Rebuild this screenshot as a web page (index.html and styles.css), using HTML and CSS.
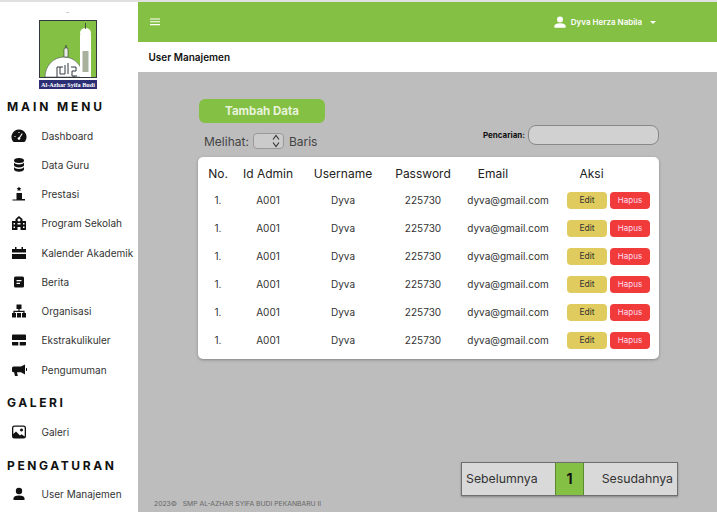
FILE: index.html
```html
<!DOCTYPE html>
<html lang="en">
<head>
  <meta charset="UTF-8">
  <meta name="viewport" content="width=device-width, initial-scale=1.0">
  <title>User Manajemen</title>
  <link rel="stylesheet" href="styles.css">
</head>
<body>
  <aside class="sidebar">
    <div class="logo-dot"></div>
    <svg class="logo" width="58" height="69" viewBox="0 0 58 69">
      <rect width="58" height="69" fill="#fff"/>
      <rect x="0.5" y="0.5" width="57" height="57" fill="#84c044" stroke="#33383f"/>
      <path d="M6 57a19 20 0 0 1 38 0z" fill="#fff" stroke="#33383f" stroke-width="0.5"/>
      <path d="M25 37v-7l0.5-2h3l0.5 2v7z" fill="#e8efe0" stroke="#33383f" stroke-width="0.6"/>
      <path d="M27 28v-3" stroke="#33383f"/>
      <rect x="41" y="15" width="11" height="42" fill="#fff"/>
      <ellipse cx="46.5" cy="13" rx="5.5" ry="5" fill="#fff"/>
      <path d="M46.5 3v6" stroke="#33383f" stroke-width="0.8"/>
      <rect x="43.5" y="31" width="6" height="21" fill="#a9b09c"/>
      <path d="M18 57v-10h6M21 47v7h5v-9M29 43v11M32 47h5v4h-4v5h5M35 56v1" fill="none" stroke="#33383f"/>
      <rect x="0" y="60" width="58" height="9" fill="#2c2f73"/>
      <text class="logo-text" x="29" y="66.5" text-anchor="middle">Al-Azhar Syifa Budi</text>
    </svg>

    <h2 class="menu-title title-main">MAIN MENU</h2>
    <nav class="menu-list">
      <a class="menu-item">
        <svg class="menu-icon" viewBox="0 0 16 16">
          <path d="M8 1.5a7.5 7.5 0 0 0-6.2 11.7 1.500 1.500 0 0 0 1.200 0.800h10a1.500 1.500 0 0 0 1.200-0.800A7.500 7.500 0 0 0 8 1.500z"/>
          <path d="M8 10.500l3.200-5M3.500 8.500h1M8 4v1" stroke="#fff" stroke-width="1.100"/>
          <circle cx="8" cy="10.500" r="1.300" fill="#fff"/>
        </svg>
        Dashboard
      </a>
      <a class="menu-item">
        <svg class="menu-icon" viewBox="0 0 16 16"><ellipse cx="8" cy="3.5" rx="5" ry="2.5"/><path d="M3 5.500c1 2.500 9 2.500 10 0v3c-1 2.500-9 2.500-10 0zM3 10c1 2.500 9 2.500 10 0v2.500c-1 3-9 3-10 0z"/></svg>
        Data Guru
      </a>
      <a class="menu-item">
        <svg class="menu-icon" viewBox="0 0 16 16"><path d="M8 0.500l0.800 1.500 1.600 0.200-1.200 1.100 0.300 1.600L8 4.200l-1.500 0.700 0.300-1.600-1.200-1.100 1.600-0.200zM5.500 7h5.500v6h3v1.500H1.500V13.500h4z"/></svg>
        Prestasi
      </a>
      <a class="menu-item">
        <svg class="menu-icon" viewBox="0 0 16 16"><path d="M8 1l3.500 3v2H15v9H9.500v-3h-3v3H1V6h3.500V4zM8 3.500a1.500 1.500 0 1 0 0.010 0zM2.500 8v1.500H4V8zm0 3.500V13H4v-1.500zM12 8v1.500h1.500V8zm0 3.500V13h1.500v-1.500zM6.500 8v1.500h3V8z" fill-rule="evenodd"/></svg>
        Program Sekolah
      </a>
      <a class="menu-item">
        <svg class="menu-icon" viewBox="0 0 16 16"><path d="M4 2h1.500v2h5V2H12v2h3v3.500H1V4h3zM1 9h14v5H1z"/></svg>
        Kalender Akademik
      </a>
      <a class="menu-item">
        <svg class="menu-icon" viewBox="0 0 16 16"><path d="M4.500 2.500h7A1.500 1.500 0 0 1 13 4v8a1.500 1.500 0 0 1-1.500 1.500h-7A1.500 1.500 0 0 1 3 12V4a1.500 1.500 0 0 1 1.500-1.500zM5.500 6v1.300h5V6zm0 2.800v1.300h3.500V8.800z" fill-rule="evenodd"/></svg>
        Berita
      </a>
      <a class="menu-item">
        <svg class="menu-icon" viewBox="0 0 16 16"><path d="M5.500 1.500h5V6H8.600v1.700h5V10H15v4.500h-4V10h1.300V9H3.700v1H5v4.500H1V10h1.400V7.700h5V6H5.500zM6 10h4v4.500H6z"/></svg>
        Organisasi
      </a>
      <a class="menu-item">
        <svg class="menu-icon" viewBox="0 0 16 16"><path d="M2 2.500h12a1 1 0 0 1 1 1V8H1V3.500a1 1 0 0 1 1-1zM1 10h6.300v3.500H2a1 1 0 0 1-1-1zM8.700 10H15v2.500a1 1 0 0 1-1 1H8.700z"/></svg>
        Ekstrakulikuler
      </a>
      <a class="menu-item">
        <svg class="menu-icon" viewBox="0 0 16 16"><path d="M14 2.500v10l-4-2.200H6l0.800 3.700H4l-0.900-3.700H2.500A1.500 1.500 0 0 1 1 8.800V6a1.500 1.500 0 0 1 1.500-1.500H10zM15 6a1.500 1.500 0 0 1 0 3z"/></svg>
        Pengumuman
      </a>
    </nav>

    <h2 class="menu-title title-sub">GALERI</h2>
    <nav class="menu-list">
      <a class="menu-item">
        <svg class="menu-icon" viewBox="0 0 16 16"><path d="M3.500 1.500h9A2.500 2.500 0 0 1 15 4v8a2.500 2.500 0 0 1-2.500 2.500h-9A2.500 2.500 0 0 1 1 12V4a2.500 2.500 0 0 1 2.500-2.500zm0 1.300A1.200 1.200 0 0 0 2.300 4v6L5 7.500l4 4 1.500-1.300 3.200 2.300V4a1.200 1.200 0 0 0-1.200-1.200zM10.500 4.500a1.500 1.500 0 1 0 0.010 0z" fill-rule="evenodd"/></svg>
        Galeri
      </a>
    </nav>

    <h2 class="menu-title title-sub">PENGATURAN</h2>
    <nav class="menu-list">
      <a class="menu-item">
        <svg class="menu-icon" viewBox="0 0 16 16"><circle cx="8" cy="5" r="3.200"/><path d="M2.500 14v-1.500c0-2 2-3 5.500-3s5.500 1 5.500 3V14z"/></svg>
        User Manajemen
      </a>
    </nav>
  </aside>

  <div class="main">
    <header class="topbar">
      <svg class="burger" width="10" height="8" viewBox="0 0 10 8"><path d="M0 1h10M0 3.800h10M0 6.600h10" stroke="#fff" stroke-width="1.100"/></svg>
      <div class="user-box">
        <svg width="12" height="12" viewBox="0 0 16 16" fill="#fff"><circle cx="8" cy="4.500" r="4"/><path d="M0.500 15.500v-2c0-2.500 3-4 7.500-4s7.500 1.500 7.500 4v2z"/></svg>
        <span class="user-name">Dyva Herza Nabila</span>
        <span class="caret"></span>
      </div>
    </header>
    <div class="page-title">User Manajemen</div>

    <main class="content">
      <button class="btn-add">Tambah Data</button>

      <div class="tools">
        <div class="show-rows">
          <span>Melihat:</span>
          <div class="spinner">
            <svg width="8" height="14" viewBox="0 0 8 14"><path d="M1 5.500L4 1.500l3 4M1 8.500l3 4 3-4" fill="none" stroke="#333" stroke-width="1.100"/></svg>
          </div>
          <span>Baris</span>
        </div>
        <div class="search">
          <label>Pencarian:</label>
          <div class="search-input"></div>
        </div>
      </div>

      <div class="card">
        <div class="row row-head">
          <span>No.</span><span>Id Admin</span><span>Username</span><span>Password</span><span class="head-email">Email</span><span class="head-aksi">Aksi</span>
        </div>
        <div class="row">
          <span>1.</span><span>A001</span><span>Dyva</span><span>225730</span><span>dyva@gmail.com</span>
          <span class="actions"><button class="btn-edit">Edit</button><button class="btn-del">Hapus</button></span>
        </div>
        <div class="row">
          <span>1.</span><span>A001</span><span>Dyva</span><span>225730</span><span>dyva@gmail.com</span>
          <span class="actions"><button class="btn-edit">Edit</button><button class="btn-del">Hapus</button></span>
        </div>
        <div class="row">
          <span>1.</span><span>A001</span><span>Dyva</span><span>225730</span><span>dyva@gmail.com</span>
          <span class="actions"><button class="btn-edit">Edit</button><button class="btn-del">Hapus</button></span>
        </div>
        <div class="row">
          <span>1.</span><span>A001</span><span>Dyva</span><span>225730</span><span>dyva@gmail.com</span>
          <span class="actions"><button class="btn-edit">Edit</button><button class="btn-del">Hapus</button></span>
        </div>
        <div class="row">
          <span>1.</span><span>A001</span><span>Dyva</span><span>225730</span><span>dyva@gmail.com</span>
          <span class="actions"><button class="btn-edit">Edit</button><button class="btn-del">Hapus</button></span>
        </div>
        <div class="row">
          <span>1.</span><span>A001</span><span>Dyva</span><span>225730</span><span>dyva@gmail.com</span>
          <span class="actions"><button class="btn-edit">Edit</button><button class="btn-del">Hapus</button></span>
        </div>
      </div>

      <div class="bottom">
        <div class="copyright">2023&#169;&nbsp;&nbsp; SMP AL-AZHAR SYIFA BUDI PEKANBARU II</div>
        <div class="pager">
          <span class="pager-prev">Sebelumnya</span>
          <span class="pager-num">1</span>
          <span class="pager-next">Sesudahnya</span>
        </div>
      </div>
    </main>
  </div>
</body>
</html>
```
FILE: styles.css
```css
body {
  margin: 0;
  padding-top: 2px;
  box-sizing: border-box;
  background-color: #e0e0e0;
  color: #222;
  font-family: Inter, "Liberation Sans", sans-serif;
  display: flex;
  height: 512px;
  overflow: hidden;
}

/* sidebar */
.sidebar {
  width: 138px;
  flex-shrink: 0;
  background-color: #fff;
  display: flex;
  flex-direction: column;
}

.logo-dot {
  flex-shrink: 0;
  width: 3px;
  height: 1px;
  background-color: #ccc;
  margin: 10px 0 0 66px;
}

.logo {
  display: block;
  flex-shrink: 0;
  margin: 7px 0 0 39px;
}

.logo-text {
  font-family: "Liberation Serif", serif;
  font-size: 6.2px;
  font-weight: 700;
  fill: #fff;
}

.menu-title {
  flex-shrink: 0;
  margin: 11px 0 0 7px;
  font-size: 12px;
  line-height: 15px;
  font-weight: 700;
  letter-spacing: 2.6px;
  color: #111;
}

.title-main {
  margin-top: 10px;
  letter-spacing: 2.9px;
}

.menu-list {
  flex-shrink: 0;
  display: flex;
  flex-direction: column;
  margin-top: 7px;
}

.menu-item {
  display: flex;
  align-items: center;
  height: 29.25px;
  font-size: 10px;
  color: #333;
  white-space: nowrap;
}

.menu-icon {
  width: 16px;
  height: 16px;
  margin: 0 14.5px 0 11px;
  flex-shrink: 0;
  fill: #111;
}

/* top */
.main {
  flex: 1;
  display: flex;
  flex-direction: column;
  min-width: 0;
  background-color: #bdbdbd;
}

.topbar {
  height: 40px;
  flex-shrink: 0;
  background-color: #84c044;
  display: flex;
  align-items: center;
  justify-content: space-between;
  padding: 0 61px 0 12px;
}

.burger {
  display: block;
}

.user-box {
  display: flex;
  align-items: center;
  gap: 4px;
  color: #fff;
}

.user-name {
  margin-left: 1px;
  font-size: 8px;
  font-weight: 600;
}

.caret {
  width: 0;
  height: 0;
  margin-left: 4px;
  border-left: 3px solid transparent;
  border-right: 3px solid transparent;
  border-top: 3px solid #fff;
}

.page-title {
  height: 30px;
  flex-shrink: 0;
  background-color: #fff;
  padding-left: 10.5px;
  font-size: 10px;
  font-weight: 600;
  line-height: 31px;
  color: #111;
}

/* content */
.content {
  flex: 1;
  min-height: 0;
  display: flex;
  flex-direction: column;
  padding: 27px 58px 0 60px;
}

.btn-add {
  width: 126px;
  height: 24px;
  flex-shrink: 0;
  margin-left: 1px;
  padding: 0;
  border: none;
  border-radius: 6px;
  background-color: #84c044;
  color: #e8f3db;
  font-family: inherit;
  font-size: 11.5px;
  font-weight: 700;
}

.tools {
  flex-shrink: 0;
  display: flex;
  align-items: flex-start;
  justify-content: space-between;
  margin-top: 2px;
  padding-left: 6px;
  height: 25px;
}

.show-rows {
  display: flex;
  align-items: center;
  gap: 4.5px;
  height: 16px;
  margin-top: 8px;
  font-size: 12px;
  color: #444;
}

.spinner {
  width: 31px;
  height: 16px;
  box-sizing: border-box;
  border: 1px solid #999;
  border-radius: 4px;
  background-color: #cbcbcb;
  display: flex;
  align-items: center;
  justify-content: flex-end;
  padding-right: 3px;
}

.search {
  display: flex;
  align-items: center;
  gap: 3px;
}

.search label {
  font-size: 8px;
  font-weight: 700;
  color: #111;
}

.search-input {
  width: 131px;
  height: 20px;
  box-sizing: border-box;
  border: 1px solid #888;
  border-radius: 8px;
  background-color: #d1d1d1;
}

.card {
  flex-shrink: 0;
  margin-top: 7px;
  height: 202px;
  box-sizing: border-box;
  padding-top: 4px;
  background-color: #fff;
  border-radius: 5px;
  box-shadow: 0 1px 3px rgba(0, 0, 0, 0.3);
}

.row {
  display: grid;
  grid-template-columns: 40px 60px 90px 70px 100px 101px;
  align-items: center;
  height: 28px;
  text-align: center;
  font-size: 10px;
  color: #333;
}

.row-head {
  height: 25px;
  font-size: 12px;
  color: #222;
}

.head-email {
  padding-right: 30px;
}

.head-aksi {
  padding-right: 34px;
}

.actions {
  display: flex;
  gap: 3px;
  padding-left: 9px;
}

.actions button {
  width: 40px;
  height: 17px;
  padding: 0;
  border: none;
  border-radius: 4px;
  font-family: inherit;
}

.btn-edit {
  background-color: #dfcb5e;
  color: #333;
  font-size: 8.5px;
}

.btn-del {
  background-color: #f13a3a;
  color: #fde;
  font-size: 8px;
}

.bottom {
  flex: 1;
  display: flex;
  align-items: flex-end;
  justify-content: space-between;
  margin-left: -44px;
  margin-right: -19px;
  padding-bottom: 4px;
}

.copyright {
  font-size: 6.8px;
  color: #666;
}

.pager {
  display: flex;
  height: 34px;
  box-sizing: border-box;
  margin-bottom: 12px;
  border: 1px solid #6f6f6f;
  background-color: #d9d9d9;
  box-shadow: 0 1px 2px rgba(0, 0, 0, 0.3);
  font-size: 12.3px;
  color: #333;
  line-height: 32px;
}

.pager-prev {
  width: 93px;
  padding-left: 4px;
  box-sizing: border-box;
}

.pager-num {
  width: 29px;
  box-sizing: border-box;
  text-align: center;
  background-color: #84c044;
  border-left: 1px solid #5a8a30;
  border-right: 1px solid #5a8a30;
  font-size: 14px;
  font-weight: 700;
  color: #111;
}

.pager-next {
  width: 93px;
  padding-right: 4px;
  box-sizing: border-box;
  text-align: right;
}
```
